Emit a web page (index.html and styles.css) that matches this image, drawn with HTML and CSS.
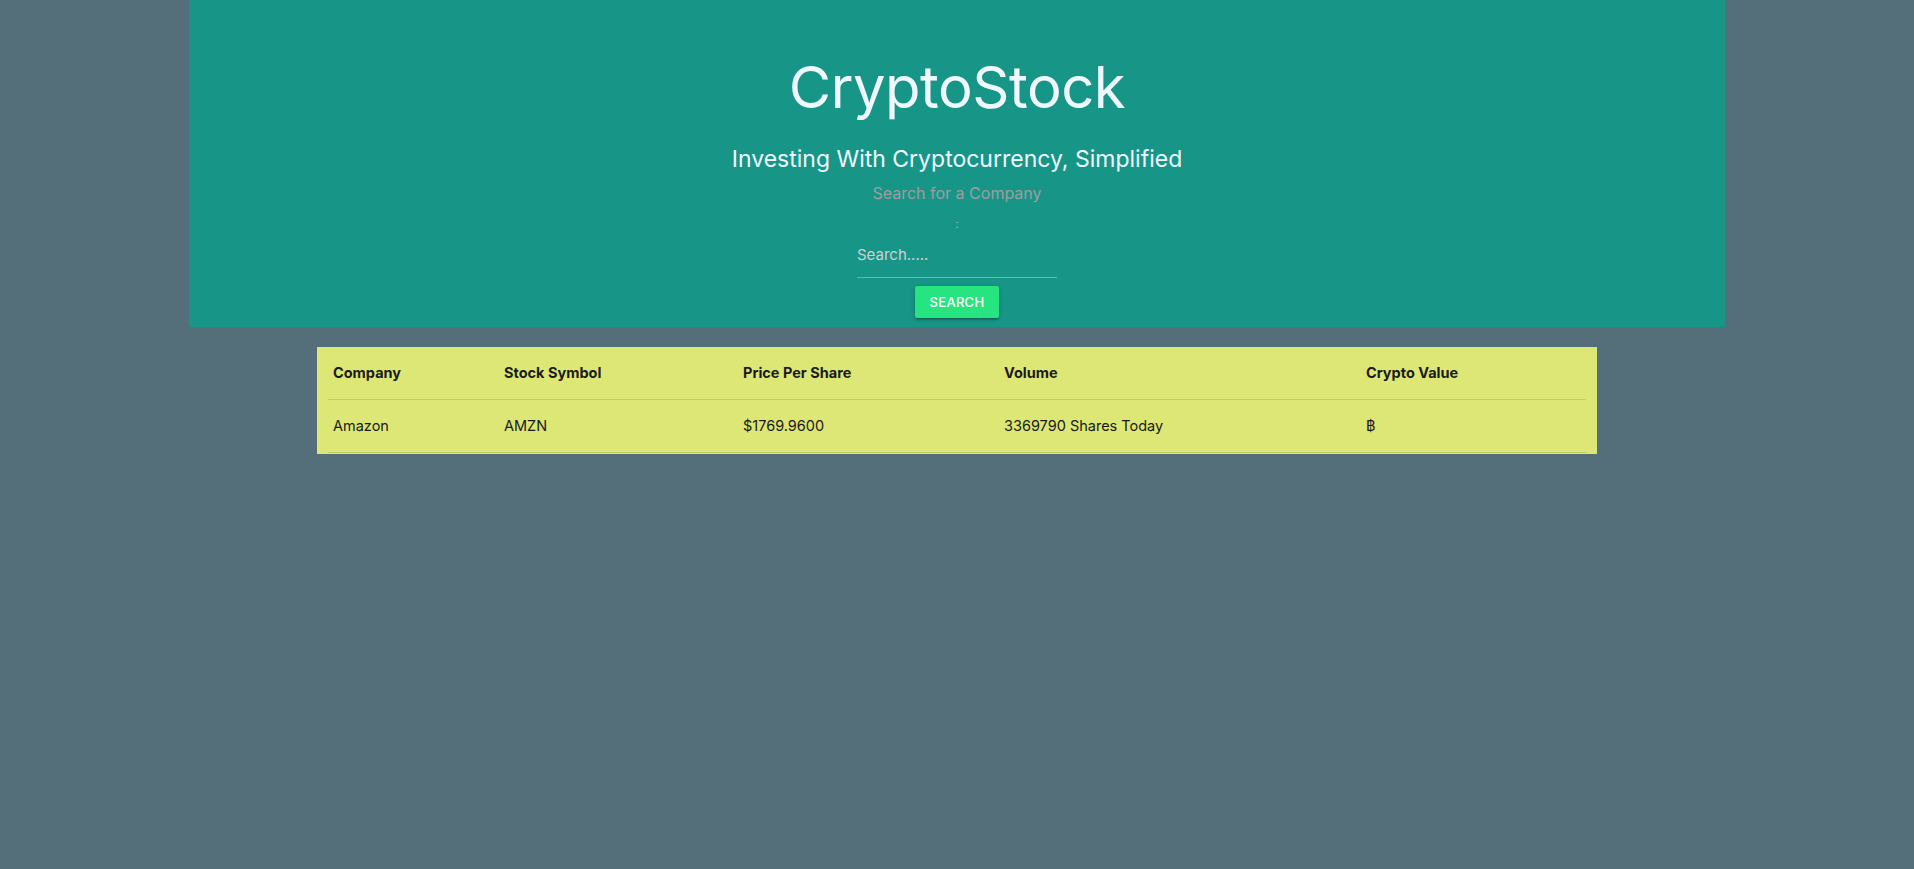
FILE: index.html
```html
<!DOCTYPE html>
<html lang="en">
<head>
<meta charset="utf-8">
<title>CryptoStock</title>
<link rel="stylesheet" href="styles.css">
</head>
<body>
<header class="hero">
  <h1 class="hero-title">CryptoStock</h1>
  <h5 class="hero-subtitle">Investing With Cryptocurrency, Simplified</h5>
  <form class="search-form">
    <label class="search-label" for="search">Search for a Company</label>
    <span class="search-colon">:</span>
    <input class="search-input" id="search" type="text" placeholder="Search.....">
    <button class="search-btn" type="button">SEARCH</button>
  </form>
</header>
<main class="container">
  <table class="stock-table">
    <thead>
      <tr>
        <th class="col-company">Company</th>
        <th class="col-symbol">Stock Symbol</th>
        <th class="col-price">Price Per Share</th>
        <th class="col-volume">Volume</th>
        <th class="col-crypto">Crypto Value</th>
      </tr>
    </thead>
    <tbody>
      <tr>
        <td>Amazon</td>
        <td>AMZN</td>
        <td>$1769.9600</td>
        <td>3369790 Shares Today</td>
        <td>&#3647;</td>
      </tr>
    </tbody>
  </table>
</main>
</body>
</html>
```

FILE: styles.css
```css
* { box-sizing: border-box; }

html, body {
  margin: 0;
  padding: 0;
  height: 100%;
}

body {
  background: #546e7a;
  font-family: Inter, "Noto Sans", "Liberation Sans", sans-serif;
  color: #1e1e1e;
}

.hero {
  width: 1536px;
  margin: 0 auto;
  background: #179688;
  display: flex;
  flex-direction: column;
  align-items: center;
  padding: 55px 0 10px;
  height: 327px;
}

.hero-title {
  margin: 0;
  font-size: 58px;
  line-height: 65px;
  font-weight: 400;
  color: #f0f8ff;
  letter-spacing: -0.5px;
}

.hero-subtitle {
  margin: 27px 0 0;
  font-size: 23px;
  line-height: 25px;
  font-weight: 400;
  color: #f0f8ff;
}

.search-form {
  display: flex;
  flex-direction: column;
  align-items: center;
}

.search-label {
  margin-top: 11px;
  font-size: 16px;
  line-height: 20px;
  color: #9e9e9e;
}

.search-colon {
  margin-top: 14px;
  font-size: 12px;
  line-height: 14px;
  color: #b0b0b0;
}

.search-input {
  margin-top: 5px;
  width: 200px;
  height: 42px;
  padding: 0 0 5px;
  border: none;
  border-bottom: 1px solid #9e9e9e;
  background: transparent;
  font-family: inherit;
  font-size: 15px;
  color: #e0e0e0;
  outline: none;
}

.search-input::placeholder {
  color: #d0d0d0;
}

.search-btn {
  margin-top: 8px;
  width: 84px;
  height: 32px;
  border: none;
  border-radius: 2px;
  background: #26e480;
  color: #ffffff;
  font-family: inherit;
  font-size: 13px;
  font-weight: 500;
  letter-spacing: 0.3px;
  box-shadow: 0 2px 2px 0 rgba(0,0,0,0.14), 0 3px 1px -2px rgba(0,0,0,0.12), 0 1px 5px 0 rgba(0,0,0,0.2);
}

.container {
  width: 1280px;
  margin: 20px auto 0;
  background: #dce775;
  padding: 0 11px 1px 11px;
}

.stock-table {
  width: 100%;
  table-layout: fixed;
  border-collapse: collapse;
  font-size: 14.5px;
}

.stock-table th,
.stock-table td {
  text-align: left;
  padding: 15px 5px;
  line-height: 22px;
  border-bottom: 1px solid #c4cc67;
}

.stock-table th {
  font-weight: 700;
  color: #1a1a1a;
}

.stock-table td {
  font-weight: 400;
  color: #1a1a1a;
}

.col-company { width: 171px; }
.col-symbol { width: 239px; }
.col-price { width: 261px; }
.col-volume { width: 362px; }
.col-crypto { width: auto; }
```
